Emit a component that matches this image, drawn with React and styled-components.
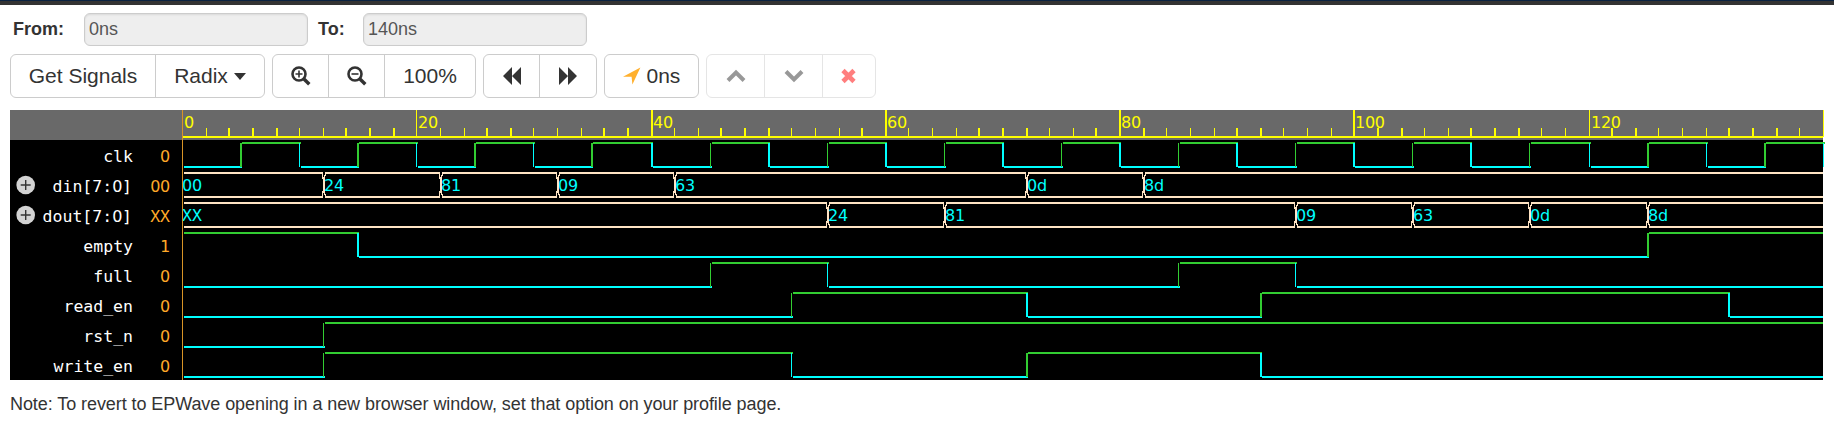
import React from "react";
import styled, { createGlobalStyle } from "styled-components";

const GlobalStyle = createGlobalStyle`
  * { box-sizing: border-box; }
  body {
    margin: 0;
    background: #fff;
    color: #333;
    font-family: "Liberation Sans", Arial, sans-serif;
    overflow: hidden;
  }
`;

const Page = styled.div`
  height: 425px;
`;

const TopBar = styled.div`
  height: 5px;
  background: #333;
  border-top: 1px solid #0a2240;
`;

const Range = styled.div`
  display: flex;
  align-items: center;
  padding: 8px 0 0 13px;
`;

const Label = styled.label`
  width: ${(p) => p.$w}px;
  font-size: 18px;
  font-weight: 700;
  line-height: 33px;
`;

const Field = styled.input`
  width: 224px;
  height: 33px;
  margin-right: 10px;
  padding: 0 4px 1px;
  border: 1px solid #ccc;
  border-radius: 6px;
  background: #eee;
  color: #555;
  font: 18px "Liberation Sans", Arial, sans-serif;
  box-shadow: inset 0 1px 2px rgba(0, 0, 0, 0.09);
`;

const Toolbar = styled.div`
  display: flex;
  gap: 7px;
  padding: 8px 0 0 10px;
`;

const Group = styled.div`
  display: flex;
  height: 44px;
  border: 1px solid #ccc;
  border-radius: 6px;
  opacity: ${(p) => (p.$off ? 0.5 : 1)};
`;

const Button = styled.button`
  display: flex;
  align-items: center;
  justify-content: center;
  width: ${(p) => p.$w}px;
  padding: 0;
  border: 0;
  border-right: ${(p) => (p.$last ? 0 : "1px solid #ccc")};
  background: none;
  color: #333;
  font: 21px "Liberation Sans", Arial, sans-serif;
`;

const Panel = styled.div`
  display: flex;
  width: 1813px;
  height: 270px;
  margin: 12px 0 0 10px;
  background: #000;
`;

const Note = styled.p`
  margin: 13px 0 0 10px;
  font-size: 18px;
  line-height: 22px;
  letter-spacing: -0.075px;
`;

const Wave = styled.svg`
  display: block;
  overflow: visible;
`;

const SignalText = styled.text`
  font: 16.5px "DejaVu Sans Mono", monospace;
  fill: ${(p) => p.$c};
`;

const Digits = styled.text`
  font: 16px "DejaVu Sans", sans-serif;
  letter-spacing: -0.25px;
  fill: ${(p) => p.$c};
`;

const PlainZero = styled.tspan`
  font: 16px "DejaVu Sans", sans-serif;
  letter-spacing: -0.25px;
`;

const ZoomIcon = ({ plus }) => (
  <svg width="20" height="20" viewBox="0 0 20 20" fill="none" stroke="#333">
    <circle cx="8" cy="8" r="6.5" strokeWidth="2.6" />
    <path d="M12.7 12.7L18.3 18.3" strokeWidth="3.4" />
    <path d={plus ? "M4.5 8H11.5M8 4.5V11.5" : "M4.5 8H11.5"} strokeWidth="1.6" />
  </svg>
);

const LOW = "#00ffff";
const HIGH = "#32cd32";
const BUS = "#ffe4c4";

// One time unit is 7.8125 grid cells, and a grid cell is 1.5 pixels wide.
const cell = (t) => Math.floor(121.5 + 7.8125 * t);
const px = (t) => Math.ceil(cell(t) * 1.5) - 10;
const lineWidth = (t) => (cell(t) % 2 ? 1 : 2);

const clk = Array.from({ length: 29 }, (_, i) => [i * 5, i % 2]);

const SIGNALS = [
  { name: "clk", value: "0", bits: clk },
  { name: "din[7:0]", value: "00", bus: [[0, "00"], [12, "24"], [22, "81"], [32, "09"], [42, "63"], [72, "0d"], [82, "8d"]] },
  { name: "dout[7:0]", value: "XX", bus: [[0, "XX"], [55, "24"], [65, "81"], [95, "09"], [105, "63"], [115, "0d"], [125, "8d"]] },
  { name: "empty", value: "1", bits: [[0, 1], [15, 0], [125, 1]] },
  { name: "full", value: "0", bits: [[0, 0], [45, 1], [55, 0], [85, 1], [95, 0]] },
  { name: "read_en", value: "0", bits: [[0, 0], [52, 1], [72, 0], [92, 1], [132, 0]] },
  { name: "rst_n", value: "0", bits: [[0, 0], [12, 1]] },
  { name: "write_en", value: "0", bits: [[0, 0], [12, 1], [52, 0], [72, 1], [92, 0]] },
];

const Value = ({ text, color, ...rest }) => {
  const Text = /[X1]/.test(text) && !/[08]/.test(text) ? SignalText : Digits;
  return <Text $c={color} {...rest}>{text}</Text>;
};

const Bits = ({ bits, y }) =>
  bits.map(([t, v], i) => {
    const x = px(t) + 2;
    const end = i + 1 < bits.length ? px(bits[i + 1][0]) + 2 : 1813;
    return (
      <g key={t} fill={v ? HIGH : LOW}>
        {t < 140 && <rect x={x} y={v ? y + 2 : y + 26} width={end - x} height="2" />}
        {i > 0 && <rect x={px(t)} y={y + 3} width={lineWidth(t)} height="24" />}
      </g>
    );
  });

const Bus = ({ bus, y }) =>
  bus.map(([t, v], i) => {
    const edge = px(t);
    const start = edge + (i ? 3 : 2);
    const end = i + 1 < bus.length ? px(bus[i + 1][0]) : 1813;
    return (
      <g key={t} fill={BUS}>
        <rect x={start} y={y + 2} width={end - start} height="2" />
        <rect x={start} y={y + 26} width={end - start} height="2" />
        {i > 0 && (
          <>
            <rect x={edge - 1} y={y + 2} width="1" height="7" />
            <rect x={edge + 2} y={y + 2} width="1" height="4" />
            <rect x={edge + 1} y={y + 5} width="1" height="4" />
            <rect x={edge} y={y + 7} width="1" height="4" />
            <rect x={edge} y={y + 9} width="2" height="12" />
            <rect x={edge} y={y + 19} width="1" height="4" />
            <rect x={edge + 1} y={y + 21} width="1" height="4" />
            <rect x={edge + 2} y={y + 24} width="1" height="4" />
            <rect x={edge - 1} y={y + 21} width="1" height="7" />
          </>
        )}
        <Value x={i ? edge + 1 : edge} y={y + 21} color={LOW} text={v} />
      </g>
    );
  });

const Name = ({ text, y }) => {
  const [head, tail] = text.split("0");
  return (
    <SignalText x={tail ? 122 : 123} y={y} textAnchor="end" $c="#fff">
      {head}
      {tail && <PlainZero>0</PlainZero>}
      {tail}
    </SignalText>
  );
};

const Waveform = () => (
  <Wave width="1813" height="270" shapeRendering="crispEdges">
    <rect width="1813" height="30" fill="#696969" />
    <rect x="173" y="26" width="1640" height="2" fill="#ff0" />
    {Array.from({ length: 70 }, (_, i) => (i + 1) * 2).map((t) => {
      const major = t % 20 === 0;
      return (
        <g key={t}>
          <rect x={px(t)} y={major ? 0 : 18} width={lineWidth(t)} height={major ? 27 : 9} fill="#ff0" />
          {major && t < 140 && <Digits x={px(t) + 2} y="18" $c="#ff0">{t}</Digits>}
        </g>
      );
    })}
    <Digits x="174" y="18" $c="#ff0">0</Digits>
    {SIGNALS.map((s, i) => {
      const y = 30 + i * 30;
      return (
        <g key={s.name}>
          {s.bus && (
            <g shapeRendering="auto">
              <circle cx="15.7" cy={y + 15} r="9.3" fill="#d3d3d3" />
              <path d={`M10.7 ${y + 15}h10M15.7 ${y + 10}v10`} stroke="#333" strokeWidth="1.4" />
            </g>
          )}
          <Name text={s.name} y={y + 22} />
          <Value x="160" y={y + 22} textAnchor="end" color="#ffa928" text={s.value} />
          {s.bits ? <Bits bits={s.bits} y={y} /> : <Bus bus={s.bus} y={y} />}
        </g>
      );
    })}
    <rect x="172" width="1" height="270" fill="#d99426" />
  </Wave>
);

const Caret = styled.span`
  margin-left: 6px;
  border: 6px solid transparent;
  border-top: 7px solid #333;
  border-bottom: 0;
`;

export default function App() {
  return (
    <Page>
      <GlobalStyle />
      <TopBar />
      <Range>
        <Label $w={71}>From:</Label>
        <Field readOnly value="0ns" />
        <Label $w={45}>To:</Label>
        <Field readOnly value="140ns" />
      </Range>
      <Toolbar>
        <Group>
          <Button $w={145}>Get Signals</Button>
          <Button $w={108} $last>Radix<Caret /></Button>
        </Group>
        <Group>
          <Button $w={56}><ZoomIcon plus /></Button>
          <Button $w={56}><ZoomIcon /></Button>
          <Button $w={90} $last>100%</Button>
        </Group>
        <Group>
          <Button $w={56}>
            <svg width="20" height="18" viewBox="0 0 20 18" fill="#333"><path d="M1 9L10 0V18ZM10 9L19 0V18Z" /></svg>
          </Button>
          <Button $w={56} $last>
            <svg width="20" height="18" viewBox="0 0 20 18" fill="#333"><path d="M19 9L10 0V18ZM10 9L1 0V18Z" /></svg>
          </Button>
        </Group>
        <Group>
          <Button $w={93} $last>
            <svg width="18" height="18" viewBox="0 0 18 18" fill="#ffb02e"><path d="M17.4 0.4L9.4 17.6L8.6 9.8L0 9.8Z" /></svg>
            <span>&nbsp;0ns</span>
          </Button>
        </Group>
        <Group $off>
          <Button $w={58}>
            <svg width="20" height="14" viewBox="0 0 20 14" fill="none" stroke="#333" strokeWidth="4"><path d="M2 11.5L10 3.5L18 11.5" /></svg>
          </Button>
          <Button $w={58}>
            <svg width="20" height="14" viewBox="0 0 20 14" fill="none" stroke="#333" strokeWidth="4"><path d="M2 2.5L10 10.5L18 2.5" /></svg>
          </Button>
          <Button $w={52} $last>
            <svg width="16" height="16" viewBox="0 0 16 16" stroke="#f00" strokeWidth="4.6"><path d="M2 2.5L13 13.5M13 2.5L2 13.5" /></svg>
          </Button>
        </Group>
      </Toolbar>
      <Panel><Waveform /></Panel>
      <Note>Note: To revert to EPWave opening in a new browser window, set that option on your profile page.</Note>
    </Page>
  );
}
